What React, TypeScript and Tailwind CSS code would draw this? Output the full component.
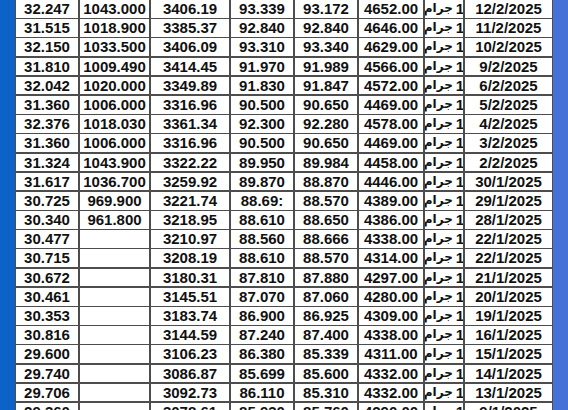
const rows: string[][] = [
  ["32.247", "1043.000", "3406.19", "93.339", "93.172", "4652.00", "12/2/2025"],
  ["31.515", "1018.900", "3385.37", "92.840", "92.840", "4646.00", "11/2/2025"],
  ["32.150", "1033.500", "3406.09", "93.310", "93.340", "4629.00", "10/2/2025"],
  ["31.810", "1009.490", "3414.45", "91.970", "91.989", "4566.00", "9/2/2025"],
  ["32.042", "1020.000", "3349.89", "91.830", "91.847", "4572.00", "6/2/2025"],
  ["31.360", "1006.000", "3316.96", "90.500", "90.650", "4469.00", "5/2/2025"],
  ["32.376", "1018.030", "3361.34", "92.300", "92.280", "4578.00", "4/2/2025"],
  ["31.360", "1006.000", "3316.96", "90.500", "90.650", "4469.00", "3/2/2025"],
  ["31.324", "1043.900", "3322.22", "89.950", "89.984", "4458.00", "2/2/2025"],
  ["31.617", "1036.700", "3259.92", "89.870", "88.870", "4446.00", "30/1/2025"],
  ["30.725", "969.900", "3221.74", "88.69:", "88.570", "4389.00", "29/1/2025"],
  ["30.340", "961.800", "3218.95", "88.610", "88.650", "4386.00", "28/1/2025"],
  ["30.477", "", "3210.97", "88.560", "88.666", "4338.00", "22/1/2025"],
  ["30.715", "", "3208.19", "88.610", "88.570", "4314.00", "22/1/2025"],
  ["30.672", "", "3180.31", "87.810", "87.880", "4297.00", "21/1/2025"],
  ["30.461", "", "3145.51", "87.070", "87.060", "4280.00", "20/1/2025"],
  ["30.353", "", "3183.74", "86.900", "86.925", "4309.00", "19/1/2025"],
  ["30.816", "", "3144.59", "87.240", "87.400", "4338.00", "16/1/2025"],
  ["29.600", "", "3106.23", "86.380", "85.339", "4311.00", "15/1/2025"],
  ["29.740", "", "3086.87", "85.699", "85.600", "4332.00", "14/1/2025"],
  ["29.706", "", "3092.73", "86.110", "85.310", "4332.00", "13/1/2025"],
  ["29.360", "", "3078.61", "85.930", "85.760", "4290.00", "9/1/2025"],
];

export default function App() {
  return (
    <div className="flex h-[410px] w-[568px] overflow-hidden bg-white">
      <div className="w-[15px] shrink-0 bg-[#0c62c6]" />
      <div
        className="grid w-[538px] shrink-0 content-start grid-cols-[62px_69px_78px_62px_62px_64px_38px_87px] auto-rows-[17.7px] gap-x-[2px] gap-y-[1.5px] bg-[#4d4d4d] px-[1px] text-[15px] font-bold leading-[17.7px] text-[#111]"
        style={{ fontFamily: '"Liberation Sans", Arial, sans-serif' }}
      >
        {rows.map((r, i) => (
          <Row key={i} cells={r} />
        ))}
      </div>
      <div className="w-[15px] shrink-0 bg-[#4671d6]" />
    </div>
  );
}

function Row({ cells }: { cells: string[] }) {
  const [a, b, c, d, e, f, date] = cells;
  return (
    <>
      <div className="bg-white text-center">{a}</div>
      <div className="bg-white text-center">{b}</div>
      <div className="bg-white text-center">{c}</div>
      <div className="bg-white text-center">{d}</div>
      <div className="bg-white text-center">{e}</div>
      <div className="bg-white text-center">{f}</div>
      <div className="flex items-center justify-center overflow-hidden whitespace-nowrap bg-white" dir="rtl">
        <span>1</span>
        <span className="mr-[3px] text-[12px] font-bold" style={{ fontFamily: '"DejaVu Sans", sans-serif' }}>
          جرام
        </span>
      </div>
      <div className="bg-white text-center">{date}</div>
    </>
  );
}
